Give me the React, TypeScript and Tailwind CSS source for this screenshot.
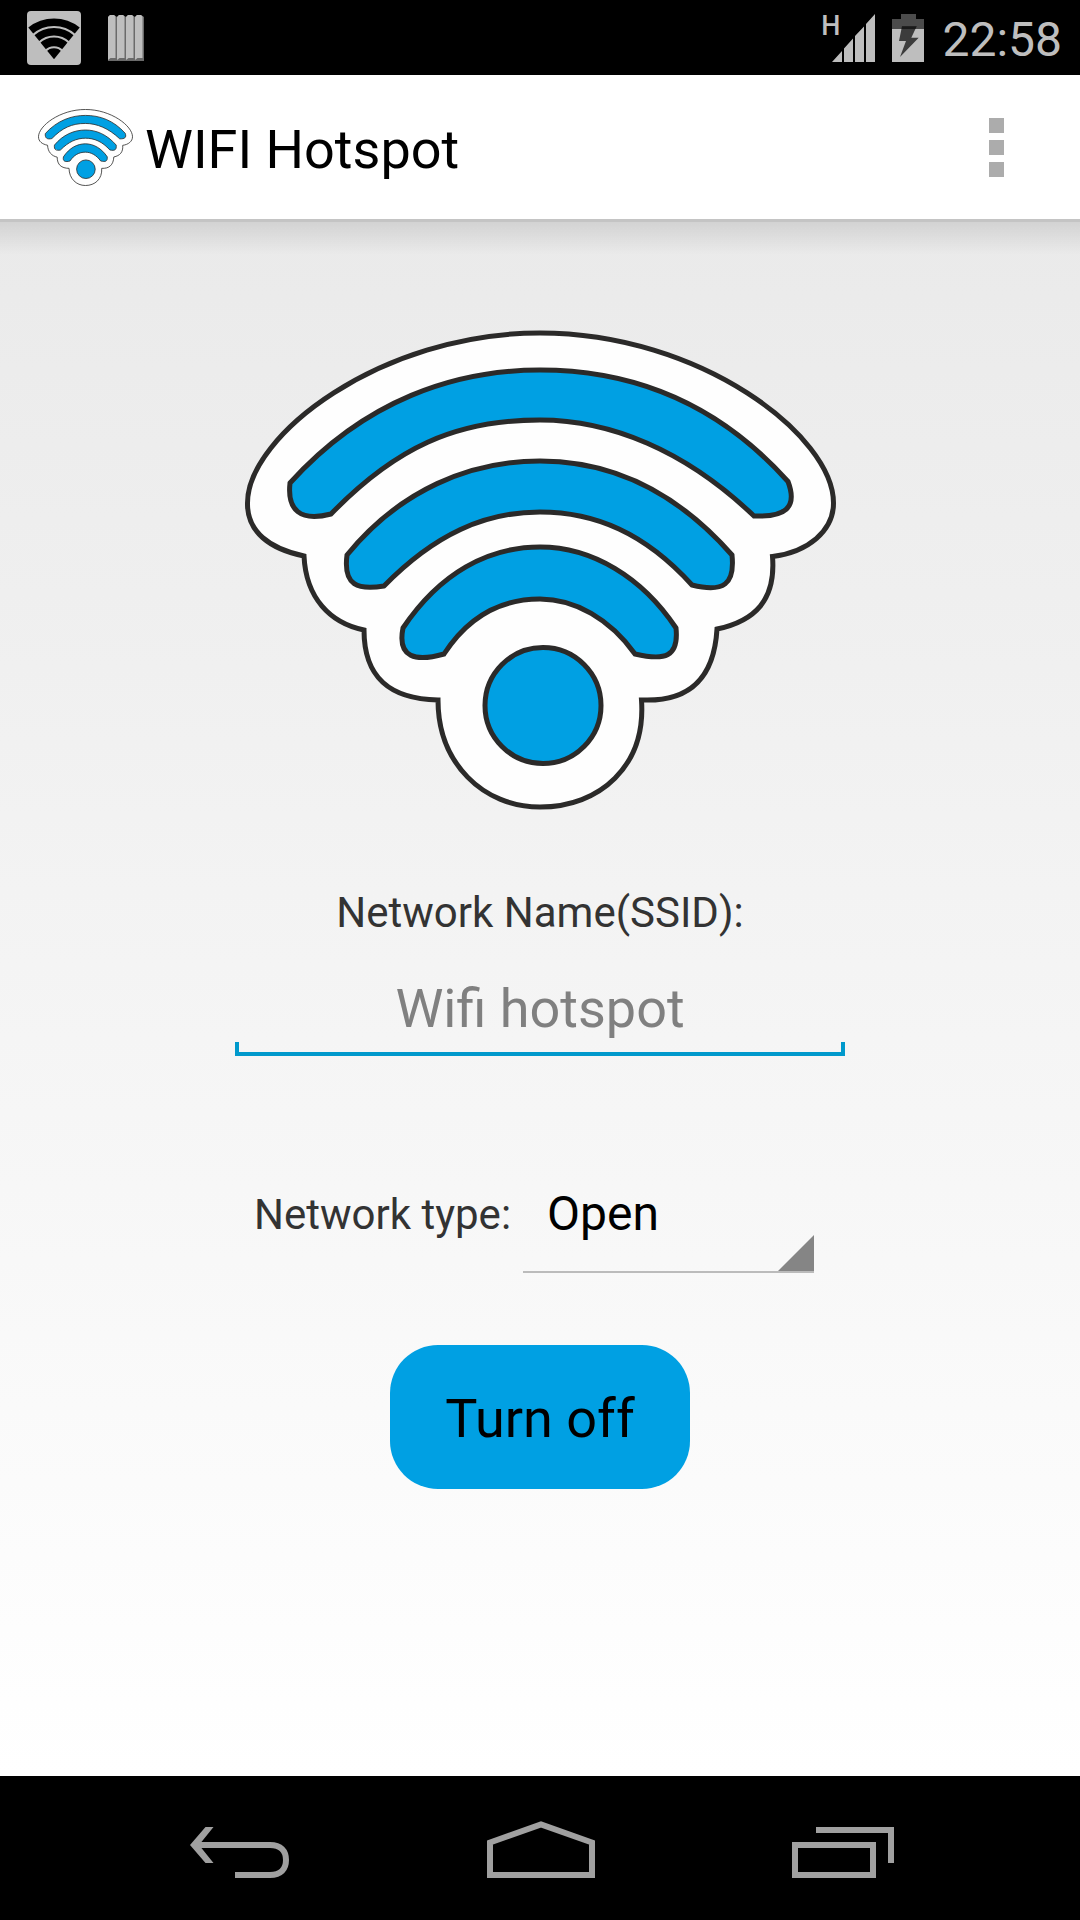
import { useState } from "react";

const networkTypes = ["Open", "WPA PSK", "WPA2 PSK"];

function HotspotLogo({ className }: { className: string }) {
  return (
    <svg viewBox="245 330 591 480" className={className} aria-hidden="true">
      <g stroke="#2b2a29" strokeWidth="5">
        <path
          fill="#fefefe"
          d="M304 556C270 549 247 532 247.500 503C247.500 436 380 333 540 333C701 333 833.500 436 833.500 503C833.500 531 808 552 772.500 556.500C776 600 755 621 717 629C714 680 688 702 641.500 700C646 766 600 807 540 807C483 807 438 763 438 700C390 699 364 678 364 630C330 623 306 598 304 556Z"
        />
        <g fill="#00a0e3">
          <path d="M290 483C365 400 455 370 540 370C630 370 715 400 788 481.500C798 508 785 517 754 516C685 450 610 420 540 420C455 420 395 448 331 514C300 522 287 510 290 483Z" />
          <path d="M347 555C400 490 470 461 540 461C610 461 675 490 732 555C735 584 724 593 692 585C645 533 595 512 540 512C485 512 435 534 384 586C358 590 343 586 347 555Z" />
          <path d="M403 628C440 573 488 547 540 547C592 547 642 577 676 628C679 657 665 661 635 654C610 619 575 599 540 599C500 599 468 617 444 654C416 662 397 658 403 628Z" />
          <circle cx="543" cy="705.500" r="58" />
        </g>
      </g>
    </svg>
  );
}

function StatusBar() {
  return (
    <div className="flex h-[75px] items-center justify-between bg-black pr-[18px] pl-[27px] text-[#bebebe]">
      <div className="flex items-center gap-[27px]">
        <svg viewBox="0 0 54 54" className="size-[54px]" aria-hidden="true">
          <rect width="54" height="54" rx="4" fill="#bebebe" />
          <path d="M27 48.300L1.300 16.500A41 41 0 0 1 52.700 16.500Z" fill="#000" />
          <g fill="none" stroke="#bebebe" strokeWidth="2">
            <path d="M6 24A31.600 31.600 0 0 1 48 24" />
            <path d="M12 31.500A22 22 0 0 1 42 31.500" />
            <path d="M18.500 40A11.500 11.500 0 0 1 35.500 40" />
          </g>
        </svg>
        <svg viewBox="0 0 36 46" className="h-[46px] w-9" aria-hidden="true">
          {[0, 9, 18, 27].map((x) => (
            <g key={x}>
              <path d={`M${x} 2l2-2h4l3 2v44h-9z`} fill="#6a6a6a" />
              <path d={`M${x} 2l2-2h4l1.500 1.500v41.500h-5l-2.500 2z`} fill="#bebebe" />
            </g>
          ))}
        </svg>
      </div>
      <div className="flex items-center">
        <span className="mb-6 text-[27px] leading-6 font-medium">H</span>
        <svg viewBox="0 0 43 48" className="-ml-2 h-12 w-[43px]" aria-hidden="true">
          <path d="M0 48L10 37V48ZM12 34.500L21 24.500V48H12ZM23 22L32 12.500V48H23ZM34 10L43 0V48H34Z" fill="#bebebe" />
        </svg>
        <svg viewBox="0 0 32 48" className="ml-[17px] h-12 w-8" aria-hidden="true">
          <path d="M9 0H24V5H32V15H0V5H9Z" fill="#4b4b4b" />
          <path d="M0 15H32V48H0Z" fill="#bebebe" />
          <path d="M10 12.300H24.700L19.300 23.700H26.700L8 43L14 27H7Z" fill="#3c3c3c" />
          <path d="M10 12.300H24.700L23.400 15H9.500Z" fill="#1a1a1a" />
        </svg>
        <time className="mt-1 ml-[18px] text-5xl leading-14">22:58</time>
      </div>
    </div>
  );
}

function NavBar() {
  return (
    <nav className="flex h-36 justify-center bg-black pt-[3px]">
      <div className="grid w-[84%] grid-cols-3 pl-[2px]">
        <button type="button" aria-label="Back" className="flex items-center justify-center">
          <svg viewBox="0 0 99 57" className="h-[57px] w-[99px]" fill="none" stroke="#a0a0a0" strokeWidth="6">
            <path d="M8 24H80C91 24 96 30 96 39C96 48 91 54 80 54H45" />
            <path d="M15.500 6H23.500L9 24L23.500 42H15.500L0 24Z" fill="#a0a0a0" stroke="none" />
          </svg>
        </button>
        <button type="button" aria-label="Home" className="flex items-center justify-center">
          <svg viewBox="0 0 108 57" className="h-[57px] w-[108px]" fill="none" stroke="#a0a0a0" strokeWidth="6">
            <path d="M3 54V21.500L54 3.500L105 21.500V54Z" />
          </svg>
        </button>
        <button type="button" aria-label="Recent apps" className="flex items-center justify-center">
          <svg viewBox="0 0 102 57" className="h-[57px] w-[102px]" fill="none" stroke="#a0a0a0" strokeWidth="6">
            <path d="M24 9H99V42" />
            <path d="M3 24H81V54H3Z" />
          </svg>
        </button>
      </div>
    </nav>
  );
}

export default function App() {
  const [ssid, setSsid] = useState("");
  const [networkType, setNetworkType] = useState("Open");
  const [enabled, setEnabled] = useState(true);

  return (
    <div className="flex min-h-screen flex-col font-[Roboto,sans-serif]">
      <StatusBar />

      <header className="flex h-36 items-center bg-white pr-[76px] pl-[38px]">
        <HotspotLogo className="h-[77px] w-[95px]" />
        <h1 className="mt-[6px] ml-3 text-[54px] leading-16 text-black">WIFI Hotspot</h1>
        <button type="button" aria-label="More options" className="ml-auto grid gap-[7px]">
          <span className="size-[15px] bg-[#acacac]" />
          <span className="size-[15px] bg-[#acacac]" />
          <span className="size-[15px] bg-[#acacac]" />
        </button>
      </header>

      <main className="flex flex-1 flex-col items-center bg-linear-to-b from-[#eaeaea] to-white">
        <div className="h-9 w-full border-t-3 border-[#c4c4c4] bg-linear-to-b from-black/10 to-transparent" />
        <HotspotLogo className="mt-[75px] w-[591px] max-w-full" />

        <form className="mt-[75px] flex w-[610px] max-w-full flex-col items-center" onSubmit={(e) => e.preventDefault()}>
          <label htmlFor="ssid" className="text-[42px] leading-14 text-[#333]">
            Network Name(SSID):
          </label>
          <div className="relative mt-9 w-full border-b-4 border-[#0099cc] pb-[11px]">
            <input
              id="ssid"
              className="block h-16 w-full bg-transparent text-center text-[54px] leading-16 text-black outline-none placeholder:text-[#808080]"
              placeholder="Wifi hotspot"
              value={ssid}
              onChange={(e) => setSsid(e.target.value)}
            />
            <span className="absolute bottom-0 left-0 h-[10px] w-1 bg-[#0099cc]" />
            <span className="absolute right-0 bottom-0 h-[10px] w-1 bg-[#0099cc]" />
          </div>

          <div className="mt-[130px] flex w-full items-start justify-between pr-[31px] pl-[19px]">
            <label htmlFor="network-type" className="text-[42px] leading-[58px] text-[#333]">
              Network type:
            </label>
            <div className="relative w-[291px] border-b-2 border-[#bbb]">
              <select
                id="network-type"
                className="block w-full appearance-none bg-transparent pb-[29px] pl-6 text-5xl leading-14 text-black outline-none"
                value={networkType}
                onChange={(e) => setNetworkType(e.target.value)}
              >
                {networkTypes.map((type) => (
                  <option key={type}>{type}</option>
                ))}
              </select>
              <svg viewBox="0 0 36 36" className="pointer-events-none absolute right-0 bottom-0 size-9" aria-hidden="true">
                <path d="M36 0V36H0Z" fill="#858585" />
              </svg>
            </div>
          </div>

          <button
            type="button"
            className="mt-[72px] w-[300px] rounded-[48px] bg-[#00a0e3] pt-[42px] pb-[38px] text-[54px] leading-16 text-black"
            onClick={() => setEnabled(!enabled)}
          >
            {enabled ? "Turn off" : "Turn on"}
          </button>
        </form>
      </main>

      <NavBar />
    </div>
  );
}
